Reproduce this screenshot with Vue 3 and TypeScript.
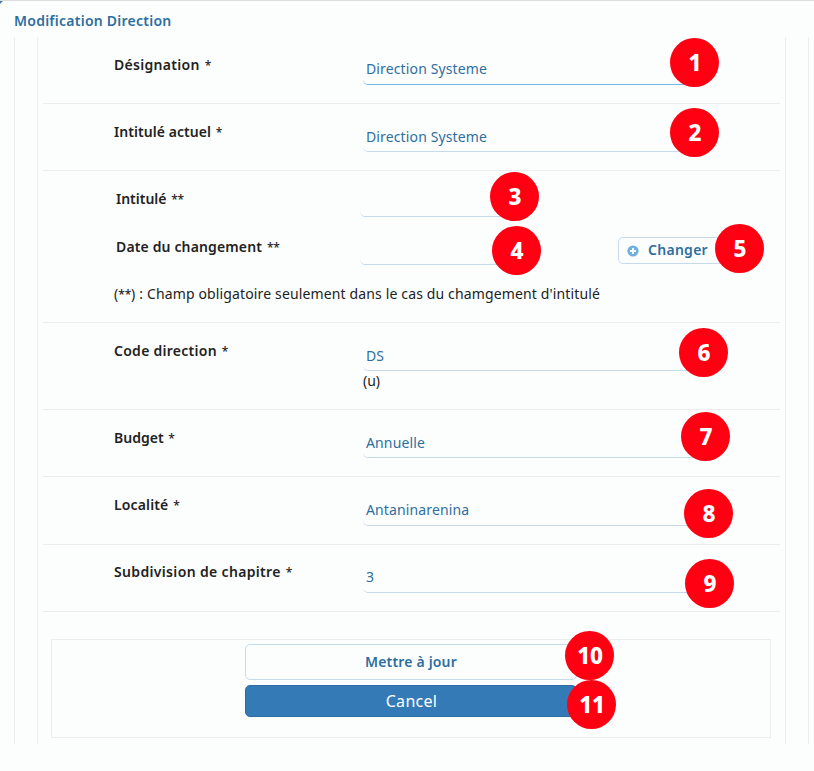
<script setup lang="ts">
interface Field {
  id: string
  label: string
  value: string
  tracking: number
  hint?: string
  active?: boolean
}

interface Marker {
  n: number
  x: number
  y: number
}

const identity: Field[] = [
  { id: 'designation', label: 'Désignation', value: 'Direction Systeme', tracking: 0.3, active: true },
  { id: 'current', label: 'Intitulé actuel', value: 'Direction Systeme', tracking: 0.06 },
]

const details: Field[] = [
  { id: 'code', label: 'Code direction', value: 'DS', tracking: 0.27, hint: '(u)' },
  { id: 'budget', label: 'Budget', value: 'Annuelle', tracking: 0 },
  { id: 'locality', label: 'Localité', value: 'Antaninarenina', tracking: 0.14 },
  { id: 'chapter', label: 'Subdivision de chapitre', value: '3', tracking: 0.34 },
]

const markers: Marker[] = [
  { n: 1, x: 670, y: 38 },
  { n: 2, x: 670, y: 108 },
  { n: 3, x: 490, y: 172 },
  { n: 4, x: 492, y: 226 },
  { n: 5, x: 715, y: 224 },
  { n: 6, x: 679, y: 328 },
  { n: 7, x: 681, y: 412 },
  { n: 8, x: 684, y: 489 },
  { n: 9, x: 685, y: 559 },
  { n: 10, x: 565, y: 631 },
  { n: 11, x: 567, y: 680 },
]
</script>

<template>
  <main class="dialog">
    <h1 class="title">Modification Direction</h1>
    <div class="outer">
      <form class="inner" @submit.prevent>
        <div v-for="f in identity" :key="f.id" class="row" :class="f.id">
          <div class="label" :style="{ letterSpacing: f.tracking + 'px' }">{{ f.label }} <span class="star">*</span></div>
          <div class="control">
            <div class="input" :class="{ active: f.active }">{{ f.value }}</div>
          </div>
        </div>

        <div class="row change">
          <div class="line">
            <div class="label">Intitulé <span class="star">**</span></div>
            <div class="input short"></div>
          </div>
          <div class="line">
            <div class="label date">Date du changement <span class="star">**</span></div>
            <div class="input short"></div>
            <button class="btn-change" type="button">
              <svg class="plus" viewBox="0 0 12 12" width="12" height="12">
                <circle cx="6" cy="6" r="5.6" fill="#6eb0de" />
                <path d="M6 3v6M3 6h6" stroke="#fcfefe" stroke-width="2" />
              </svg>
              <span class="caption">Changer</span>
            </button>
          </div>
          <p class="note">(<span class="star">**</span>) : Champ obligatoire seulement dans le cas du chamgement d'intitulé</p>
        </div>

        <div v-for="f in details" :key="f.id" class="row" :class="f.id">
          <div class="label" :style="{ letterSpacing: f.tracking + 'px' }">{{ f.label }} <span class="star">*</span></div>
          <div class="control">
            <div class="input">{{ f.value }}</div>
            <div v-if="f.hint" class="hint">{{ f.hint }}</div>
          </div>
        </div>

        <div class="actions">
          <button class="btn-update" type="submit">Mettre à jour</button>
          <button class="btn-cancel" type="button">Cancel</button>
        </div>
      </form>
    </div>
    <span v-for="m in markers" :key="m.n" class="marker" :style="{ left: m.x + 'px', top: m.y + 'px' }">{{ m.n }}</span>
  </main>
</template>

<style>
body {
  background: #fcfefe;
}
</style>

<style scoped>
* {
  box-sizing: border-box;
}

.dialog {
  position: relative;
  height: 771px;
  overflow: hidden;
  border-top: 1px solid #ddd;
  background: #fcfefe;
  color: #222;
  font: 14px/20px "Noto Sans", "Open Sans", sans-serif;
  letter-spacing: 0.13px;
}

.dialog::before {
  content: "";
  position: absolute;
  left: 0;
  top: -1px;
  width: 4px;
  height: 4px;
  background: linear-gradient(135deg, #4a7da5 40%, transparent 60%);
}

.title {
  margin: 0;
  height: 36px;
  padding: 10px 0 0 14px;
  color: #2e6e9e;
  font: 600 14px/20px "Noto Sans", "Open Sans", sans-serif;
  letter-spacing: 0.25px;
}

.outer {
  width: 795px;
  height: 707px;
  margin-left: 14px;
  padding: 0 22px;
  border: solid #eceeee;
  border-width: 0 1px;
}

.inner {
  height: 707px;
  padding: 0 5px;
  border: solid #eceeee;
  border-width: 0 1px;
}

.row {
  display: flex;
  height: 67px;
  padding: 18px 0 0 71px;
  border-bottom: 1px solid #eceeee;
}

.label {
  width: 249px;
  flex: none;
  font-weight: 600;
}

.star {
  font-size: 12px;
  font-weight: 500;
  line-height: 1;
  letter-spacing: -0.2px;
}

.label .star {
  margin-left: 1px;
}

.input {
  width: 338px;
  height: 30px;
  padding: 5px 3px 0;
  border-bottom: 1px solid #c5dbec;
  border-radius: 5px;
  color: #2e6e9e;
}

.input.active {
  padding-top: 4px;
  border-bottom-color: #79b7e7;
}

.code {
  height: 87px;
}

.locality {
  height: 68px;
}

.locality .input {
  height: 31px;
}

.chapter {
  padding-top: 17px;
}

.chapter .input {
  height: 31px;
}

.hint {
  letter-spacing: 0;
}

.change {
  display: block;
  height: 152px;
}

.line {
  display: flex;
  height: 48px;
  padding-left: 2px;
}

.line .label {
  width: 244px;
  letter-spacing: 0;
}

.line .label.date {
  letter-spacing: 0.14px;
}

.input.short {
  width: 150px;
  height: 28px;
}

.btn-change {
  display: flex;
  align-items: center;
  gap: 9px;
  width: 120px;
  height: 27px;
  margin-left: 108px;
  padding: 0 0 0 8px;
  border: 1px solid #c5dbec;
  border-radius: 5px;
  background: #fcfefe;
  color: #2e6e9e;
  font: 600 14px/20px "Noto Sans", "Open Sans", sans-serif;
  letter-spacing: 0.28px;
}

.caption {
  padding-bottom: 2px;
}

.note {
  margin: -1px 0 0;
  letter-spacing: 0.14px;
}

.actions {
  display: flex;
  flex-direction: column;
  gap: 5px;
  width: 720px;
  height: 99px;
  margin: 27px 0 0 8px;
  padding: 4px 0 0 193px;
  border: 1px solid #eceeee;
}

.btn-update,
.btn-cancel {
  width: 332px;
  padding: 0;
  border-radius: 5px;
  font-family: "Noto Sans", "Open Sans", sans-serif;
}

.btn-update {
  height: 36px;
  padding-bottom: 2px;
  border: 1px solid #c5dbec;
  background: #fcfefe;
  color: #2e6e9e;
  font-size: 14px;
  font-weight: 600;
  letter-spacing: 0.18px;
}

.btn-cancel {
  height: 32px;
  padding-left: 1px;
  border: 1px solid #2e6da4;
  background: #337ab7;
  color: #fff;
  font-size: 16px;
  letter-spacing: 0.3px;
}

.marker {
  position: absolute;
  width: 49px;
  height: 49px;
  margin-top: -1px;
  padding-left: 1px;
  border-radius: 50%;
  background: #ff0013;
  color: #fff;
  font: 800 22.5px/49px "Noto Sans", "Open Sans", sans-serif;
  letter-spacing: -0.2px;
  text-align: center;
}
</style>
